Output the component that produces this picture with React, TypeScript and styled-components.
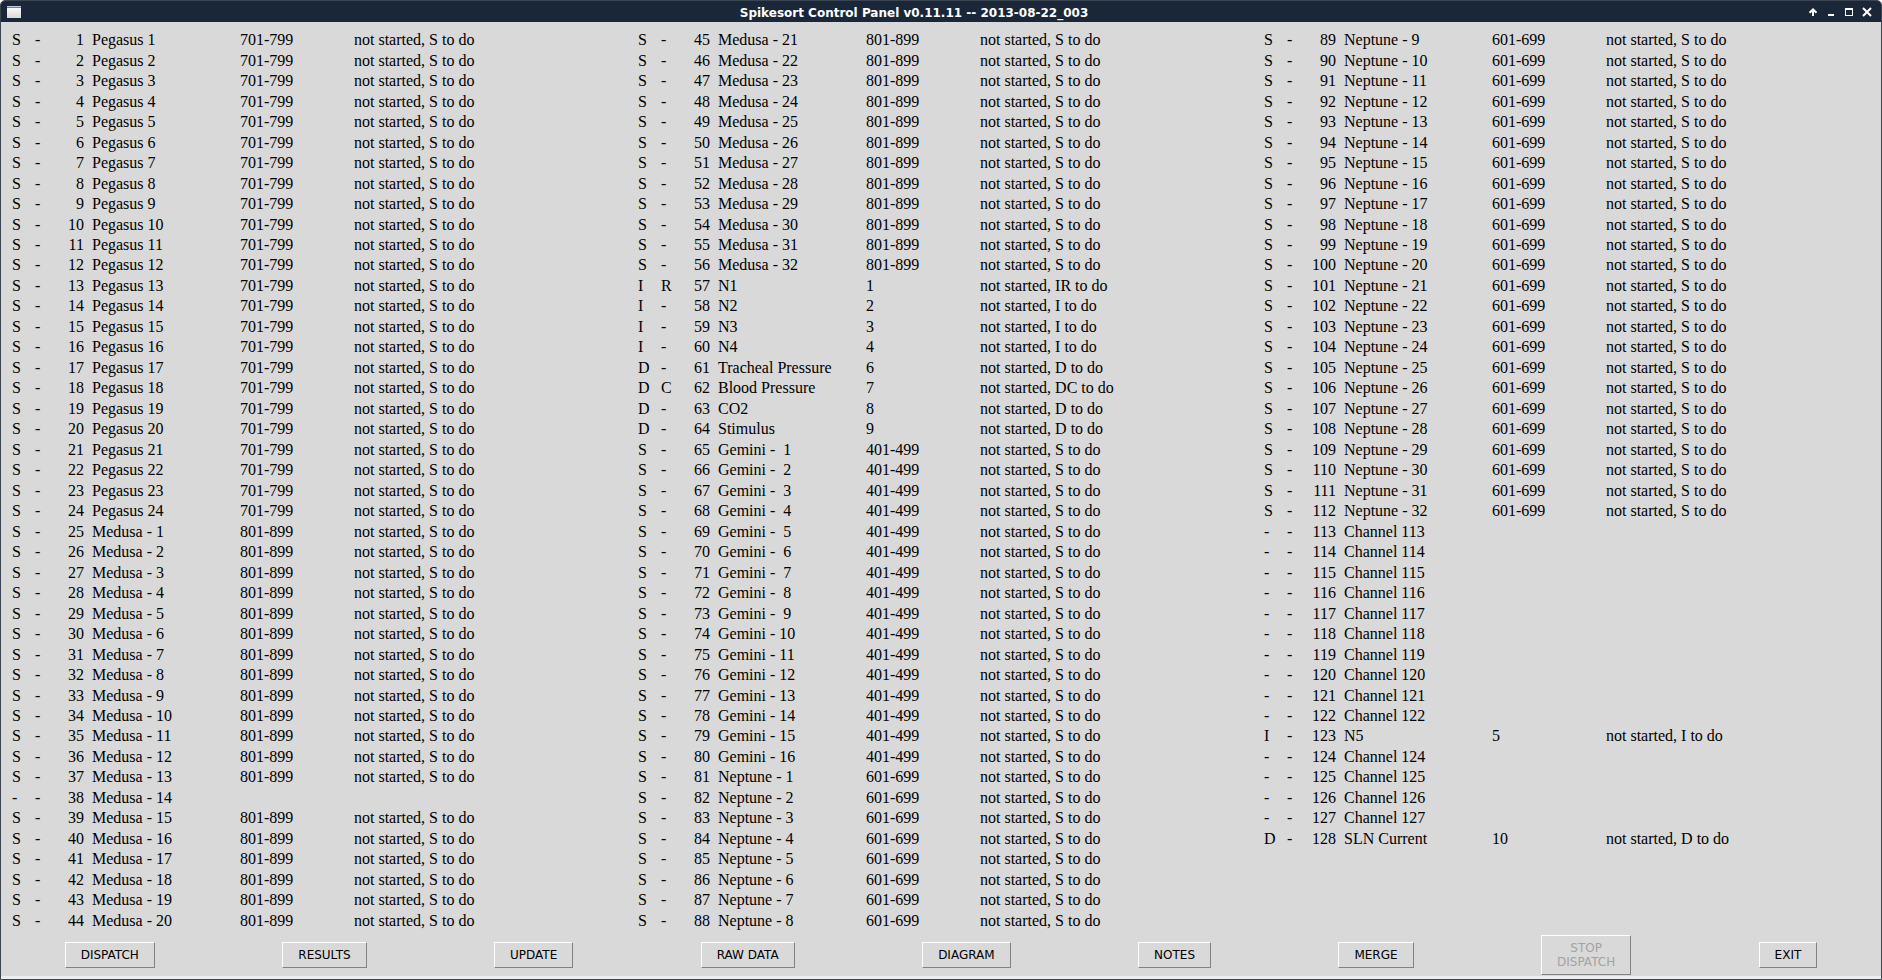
import React from "react";
import styled, { createGlobalStyle } from "styled-components";

const Global = createGlobalStyle`
  * { box-sizing: border-box; }
  body { margin: 0; background: #fff; }
`;

const Window = styled.div`
  min-height: 100vh;
  display: flex;
  flex-direction: column;
  border: 1px solid #3b4552;
  border-radius: 5px 5px 0 0;
  background: #d9d9d9;
  overflow: hidden;
`;

const TitleBar = styled.header`
  height: 21px;
  flex: none;
  display: flex;
  align-items: center;
  padding: 1px 8px 0 6px;
  background: #1a2738;
`;

const Title = styled.h1`
  flex: 1;
  margin: 0;
  padding-top: 1px;
  font: bold 12px/16px "DejaVu Sans", sans-serif;
  color: #fff;
  text-align: center;
  white-space: nowrap;
`;

const Controls = styled.div`
  display: flex;
  justify-content: flex-end;
  gap: 6px;
`;

const ControlButton = styled.button`
  width: 12px;
  height: 12px;
  padding: 0;
  border: 0;
  background: none;
  display: flex;
  align-items: center;
  justify-content: center;
`;

const Panels = styled.main`
  flex: 1;
  display: grid;
  grid-template-columns: repeat(3, minmax(0, 1fr));
  padding: 8px 2px 0 0;
`;

const ChannelTable = styled.table`
  display: grid;
`;

const ChannelBody = styled.tbody`
  display: grid;
  grid-template-rows: repeat(44, minmax(20px, 1fr));
`;

const ChannelRow = styled.tr`
  display: grid;
  grid-template-columns: 23px 23px 26px 156px 114px 1fr;
  align-items: center;
  padding-left: 11px;
  font: 16px/20px "Liberation Serif", serif;
  color: #000;
`;

const Cell = styled.td<{ $right?: boolean }>`
  padding: 0;
  white-space: pre;
  text-align: ${(p) => (p.$right ? "right" : "left")};
`;

const NameCell = styled(Cell)`
  padding-left: 8px;
`;

const Actions = styled.footer`
  flex: none;
  display: flex;
  justify-content: space-around;
  align-items: center;
  padding: 4px 0 1px;
  border-bottom: 3px solid #ededed;
`;

const ActionButton = styled.button`
  padding: 5px 15px;
  border: 1px solid;
  border-color: #fff #828282 #828282 #fff;
  border-radius: 0;
  background: #d9d9d9;
  font: 12px/14px "DejaVu Sans", sans-serif;
  color: #000;
  white-space: pre;
  &:disabled { color: #a3a3a3; }
`;

type Channel = { n: number; name: string; kind: string; extra: string; codes: string; status: string };

const special: Record<number, [string, string, string, string]> = {
  57: ["N1", "I", "R", "1"],
  58: ["N2", "I", "-", "2"],
  59: ["N3", "I", "-", "3"],
  60: ["N4", "I", "-", "4"],
  61: ["Tracheal Pressure", "D", "-", "6"],
  62: ["Blood Pressure", "D", "C", "7"],
  63: ["CO2", "D", "-", "8"],
  64: ["Stimulus", "D", "-", "9"],
  123: ["N5", "I", "-", "5"],
  128: ["SLN Current", "D", "-", "10"],
};

function describe(n: number): [string, string, string, string] {
  if (special[n]) return special[n];
  if (n === 38) return ["Medusa - 14", "-", "-", ""];
  if (n <= 24) return [`Pegasus ${n}`, "S", "-", "701-799"];
  if (n <= 56) return [`Medusa - ${n - 24}`, "S", "-", "801-899"];
  if (n <= 80) return [`Gemini - ${String(n - 64).padStart(2, " ")}`, "S", "-", "401-499"];
  if (n <= 112) return [`Neptune - ${n - 80}`, "S", "-", "601-699"];
  return [`Channel ${n}`, "-", "-", ""];
}

const channels: Channel[] = Array.from({ length: 128 }, (_, i) => {
  const n = i + 1;
  const [name, kind, extra, codes] = describe(n);
  const todo = `${kind}${extra}`.replace(/-/g, "");
  return { n, name, kind, extra, codes, status: todo ? `not started, ${todo} to do` : "" };
});

const panels = [channels.slice(0, 44), channels.slice(44, 88), channels.slice(88)];

const actions = ["DISPATCH", "RESULTS", "UPDATE", "RAW DATA", "DIAGRAM", "NOTES", "MERGE", "STOP\nDISPATCH", "EXIT"];

const AppIcon = () => (
  <svg width="14" height="12" viewBox="0 0 14 12" aria-hidden="true">
    <defs>
      <linearGradient id="paper" x1="0" y1="0" x2="0" y2="1">
        <stop offset="0" stopColor="#fff" />
        <stop offset="1" stopColor="#d8dad5" />
      </linearGradient>
    </defs>
    <rect width="14" height="12" fill="url(#paper)" />
    <rect width="14" height="1" fill="#b9cbe6" />
    <rect y="1" width="14" height="1" fill="#5b86c4" />
  </svg>
);

const windowControls = [
  { label: "Shade", art: <path d="M5 9V2M1.5 5.8L5 2.3L8.5 5.8" fill="none" stroke="#fff" strokeWidth="2" /> },
  { label: "Minimize", art: <path d="M2 8H8" stroke="#fff" strokeWidth="2" /> },
  { label: "Maximize", art: <path d="M1 1H9V9H1ZM2 3V8H8V3Z" fill="#fff" fillRule="evenodd" /> },
  { label: "Close", art: <path d="M1 1L9 9M9 1L1 9" stroke="#fff" strokeWidth="2" /> },
];

export default function App() {
  return (
    <Window>
      <Global />
      <TitleBar>
        <AppIcon />
        <Title>Spikesort Control Panel v0.11.11 -- 2013-08-22_003</Title>
        <Controls>
          {windowControls.map((c) => (
            <ControlButton key={c.label} aria-label={c.label}>
              <svg width="10" height="10" viewBox="0 0 10 10">{c.art}</svg>
            </ControlButton>
          ))}
        </Controls>
      </TitleBar>
      <Panels>
        {panels.map((rows, i) => (
          <ChannelTable key={i}>
            <ChannelBody>
              {rows.map((c) => (
                <ChannelRow key={c.n}>
                  <Cell>{c.kind}</Cell>
                  <Cell>{c.extra}</Cell>
                  <Cell $right>{c.n}</Cell>
                  <NameCell>{c.name}</NameCell>
                  <Cell>{c.codes}</Cell>
                  <Cell>{c.status}</Cell>
                </ChannelRow>
              ))}
            </ChannelBody>
          </ChannelTable>
        ))}
      </Panels>
      <Actions>
        {actions.map((a) => (
          <ActionButton key={a} disabled={a.startsWith("STOP")}>{a}</ActionButton>
        ))}
      </Actions>
    </Window>
  );
}
